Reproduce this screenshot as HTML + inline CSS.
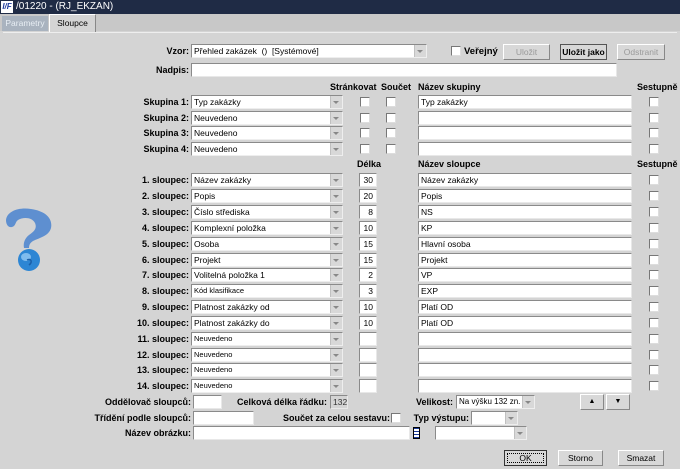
<!DOCTYPE html>
<html><head><meta charset="utf-8"><style>
*{box-sizing:border-box;margin:0;padding:0}
body{width:680px;height:469px;background:#d4d4d4;font-family:"Liberation Sans",Arial,sans-serif;font-size:9px;color:#000;position:relative;overflow:hidden}
.a{position:absolute}
.tb{left:0;top:0;width:680px;height:14px;background:#1f2b45;color:#fff;font-size:10px;line-height:14px;padding-left:16px}
.lg{left:1px;top:1px;width:12px;height:12px;background:#fff;color:#1f3c9c;font-weight:bold;font-style:italic;font-size:8px;line-height:12px;text-align:center}
.l{font-weight:bold;text-align:right;line-height:14px;white-space:nowrap}
.h{font-weight:bold;line-height:12px;white-space:nowrap}
.in{background:#fff;border:1px solid #8a8a8a;border-right-color:#e8e8e8;border-bottom-color:#e8e8e8;height:14px;line-height:12px;padding-left:2px;font-size:8.5px;white-space:nowrap;overflow:hidden}
.cb{background:#fff;border:1px solid #8a8a8a;border-right-color:#eee;border-bottom-color:#eee;height:14px;line-height:12px;padding-left:2px;font-size:8.5px;white-space:nowrap;overflow:hidden}
.cb:after{content:"";position:absolute;right:0;top:0;width:11px;height:12px;background:#d8d8d8 ;border-left:1px solid #c0c0c0}
.cb:before{content:"";position:absolute;right:3px;top:5px;border-left:3px solid transparent;border-right:3px solid transparent;border-top:3px solid #888;z-index:1}
.ck{width:10px;height:10px;background:#fff;border:1px solid #777;border-right-color:#ddd;border-bottom-color:#ddd}
.bt{background:#d8d8d8;border:1px solid #888;border-top-color:#fff;border-left-color:#fff;text-align:center;line-height:14px;height:16px;font-size:8.5px}
.dis{color:#9a9a9a}
.num{text-align:right;padding-right:3px}
</style></head><body>
<div class="a tb">/01220 - (RJ_EKZAN)</div><div class="a lg">I/F</div>
<div class="a" style="left:0;top:14px;width:680px;height:17px;background:#c8c8c8"></div>
<div class="a" style="left:2px;top:16px;width:46px;height:15px;background:#a9b3bf;color:#e8eef4;line-height:15px;text-align:center;font-size:8.5px">Parametry</div>
<div class="a" style="left:49px;top:14px;width:47px;height:18px;background:#d4d4d4;border:1px solid #fff;border-bottom:none;border-right-color:#888;line-height:16px;text-align:center;font-size:8.5px">Sloupce</div>
<div class="a" style="left:3px;top:32px;width:674px;height:1px;background:#eee"></div>

<div class="a l" style="right:491px;top:44px">Vzor:</div>
<div class="a cb" style="left:191px;top:44px;width:236px">Přehled zakázek &nbsp;() &nbsp;[Systémové]</div>
<div class="a ck" style="left:451px;top:46px"></div><div class="a h" style="left:464px;top:46px;font-size:9.5px">Veřejný</div>
<div class="a bt dis" style="left:503px;top:44px;width:47px">Uložit</div>
<div class="a bt" style="left:560px;top:44px;width:47px;border-color:#555;font-weight:bold">Uložit jako</div>
<div class="a bt dis" style="left:617px;top:44px;width:48px">Odstranit</div>
<div class="a l" style="right:491px;top:63px">Nadpis:</div>
<div class="a in" style="left:191px;top:63px;width:426px"></div>

<div class="a h" style="left:330px;top:81px">Stránkovat</div><div class="a h" style="left:381px;top:81px">Součet</div>
<div class="a h" style="left:418px;top:81px">Název skupiny</div><div class="a h" style="left:637px;top:81px">Sestupně</div>

<div class="a l" style="right:491px;top:95px">Skupina 1:</div><div class="a cb" style="left:191px;top:95px;width:152px">Typ zakázky</div><div class="a ck" style="left:360px;top:97px"></div><div class="a ck" style="left:386px;top:97px"></div><div class="a in" style="left:418px;top:95px;width:214px">Typ zakázky</div><div class="a ck" style="left:649px;top:97px"></div>
<div class="a l" style="right:491px;top:111px">Skupina 2:</div><div class="a cb" style="left:191px;top:111px;width:152px">Neuvedeno</div><div class="a ck" style="left:360px;top:113px"></div><div class="a ck" style="left:386px;top:113px"></div><div class="a in" style="left:418px;top:111px;width:214px"></div><div class="a ck" style="left:649px;top:113px"></div>
<div class="a l" style="right:491px;top:126px">Skupina 3:</div><div class="a cb" style="left:191px;top:126px;width:152px">Neuvedeno</div><div class="a ck" style="left:360px;top:128px"></div><div class="a ck" style="left:386px;top:128px"></div><div class="a in" style="left:418px;top:126px;width:214px"></div><div class="a ck" style="left:649px;top:128px"></div>
<div class="a l" style="right:491px;top:142px">Skupina 4:</div><div class="a cb" style="left:191px;top:142px;width:152px">Neuvedeno</div><div class="a ck" style="left:360px;top:144px"></div><div class="a ck" style="left:386px;top:144px"></div><div class="a in" style="left:418px;top:142px;width:214px"></div><div class="a ck" style="left:649px;top:144px"></div>

<div class="a h" style="left:357px;top:158px">Délka</div><div class="a h" style="left:418px;top:158px">Název sloupce</div><div class="a h" style="left:637px;top:158px">Sestupně</div>

<svg class="a" style="left:3px;top:208px" width="50" height="64"><path d="M3 12 C4 3 16 -1 28 1 C42 3 50 10 48 20 C46 28 36 30 30 33 C27 35 26 37 26 40 L21 40 C20 35 22 30 26 27 C32 23 34 20 32 15 C29 9 20 9 15 12 C12 14 13 18 9 19 C5 20 3 16 3 12Z" fill="#5e8fd0"/><circle cx="26" cy="52" r="11" fill="#2d86d4"/><ellipse cx="23" cy="49" rx="5" ry="4" fill="#7fbcee"/><path d="M24 52 C28 50 30 54 26 57" stroke="#1a5fa8" stroke-width="1.5" fill="none"/></svg>

<div class="a l" style="right:491px;top:173px">1. sloupec:</div><div class="a cb" style="left:191px;top:173px;width:152px">Název zakázky</div><div class="a in num" style="left:359px;top:173px;width:18px">30</div><div class="a in" style="left:418px;top:173px;width:214px">Název zakázky</div><div class="a ck" style="left:649px;top:175px"></div>
<div class="a l" style="right:491px;top:189px">2. sloupec:</div><div class="a cb" style="left:191px;top:189px;width:152px">Popis</div><div class="a in num" style="left:359px;top:189px;width:18px">20</div><div class="a in" style="left:418px;top:189px;width:214px">Popis</div><div class="a ck" style="left:649px;top:191px"></div>
<div class="a l" style="right:491px;top:205px">3. sloupec:</div><div class="a cb" style="left:191px;top:205px;width:152px">Číslo střediska</div><div class="a in num" style="left:359px;top:205px;width:18px">8</div><div class="a in" style="left:418px;top:205px;width:214px">NS</div><div class="a ck" style="left:649px;top:207px"></div>
<div class="a l" style="right:491px;top:221px">4. sloupec:</div><div class="a cb" style="left:191px;top:221px;width:152px">Komplexní položka</div><div class="a in num" style="left:359px;top:221px;width:18px">10</div><div class="a in" style="left:418px;top:221px;width:214px">KP</div><div class="a ck" style="left:649px;top:223px"></div>
<div class="a l" style="right:491px;top:237px">5. sloupec:</div><div class="a cb" style="left:191px;top:237px;width:152px">Osoba</div><div class="a in num" style="left:359px;top:237px;width:18px">15</div><div class="a in" style="left:418px;top:237px;width:214px">Hlavní osoba</div><div class="a ck" style="left:649px;top:239px"></div>
<div class="a l" style="right:491px;top:253px">6. sloupec:</div><div class="a cb" style="left:191px;top:253px;width:152px">Projekt</div><div class="a in num" style="left:359px;top:253px;width:18px">15</div><div class="a in" style="left:418px;top:253px;width:214px">Projekt</div><div class="a ck" style="left:649px;top:255px"></div>
<div class="a l" style="right:491px;top:268px">7. sloupec:</div><div class="a cb" style="left:191px;top:268px;width:152px">Volitelná položka 1</div><div class="a in num" style="left:359px;top:268px;width:18px">2</div><div class="a in" style="left:418px;top:268px;width:214px">VP</div><div class="a ck" style="left:649px;top:270px"></div>
<div class="a l" style="right:491px;top:284px">8. sloupec:</div><div class="a cb" style="left:191px;top:284px;width:152px;font-size:7.5px">Kód klasifikace</div><div class="a in num" style="left:359px;top:284px;width:18px">3</div><div class="a in" style="left:418px;top:284px;width:214px">EXP</div><div class="a ck" style="left:649px;top:286px"></div>
<div class="a l" style="right:491px;top:300px">9. sloupec:</div><div class="a cb" style="left:191px;top:300px;width:152px">Platnost zakázky od</div><div class="a in num" style="left:359px;top:300px;width:18px">10</div><div class="a in" style="left:418px;top:300px;width:214px">Platí OD</div><div class="a ck" style="left:649px;top:302px"></div>
<div class="a l" style="right:491px;top:316px">10. sloupec:</div><div class="a cb" style="left:191px;top:316px;width:152px">Platnost zakázky do</div><div class="a in num" style="left:359px;top:316px;width:18px">10</div><div class="a in" style="left:418px;top:316px;width:214px">Platí OD</div><div class="a ck" style="left:649px;top:318px"></div>
<div class="a l" style="right:491px;top:332px">11. sloupec:</div><div class="a cb" style="left:191px;top:332px;width:152px;font-size:7.5px">Neuvedeno</div><div class="a in" style="left:359px;top:332px;width:18px"></div><div class="a in" style="left:418px;top:332px;width:214px"></div><div class="a ck" style="left:649px;top:334px"></div>
<div class="a l" style="right:491px;top:348px">12. sloupec:</div><div class="a cb" style="left:191px;top:348px;width:152px;font-size:7.5px">Neuvedeno</div><div class="a in" style="left:359px;top:348px;width:18px"></div><div class="a in" style="left:418px;top:348px;width:214px"></div><div class="a ck" style="left:649px;top:350px"></div>
<div class="a l" style="right:491px;top:363px">13. sloupec:</div><div class="a cb" style="left:191px;top:363px;width:152px;font-size:7.5px">Neuvedeno</div><div class="a in" style="left:359px;top:363px;width:18px"></div><div class="a in" style="left:418px;top:363px;width:214px"></div><div class="a ck" style="left:649px;top:365px"></div>
<div class="a l" style="right:491px;top:379px">14. sloupec:</div><div class="a cb" style="left:191px;top:379px;width:152px;font-size:7.5px">Neuvedeno</div><div class="a in" style="left:359px;top:379px;width:18px"></div><div class="a in" style="left:418px;top:379px;width:214px"></div><div class="a ck" style="left:649px;top:381px"></div>

<div class="a l" style="right:489px;top:395px">Oddělovač sloupců:</div><div class="a in" style="left:193px;top:395px;width:29px"></div>
<div class="a l" style="right:353px;top:395px">Celková délka řádku:</div><div class="a in" style="left:330px;top:395px;width:18px;background:#d4d4d4;color:#333">132</div>
<div class="a l" style="right:227px;top:395px">Velikost:</div><div class="a cb" style="left:456px;top:395px;width:79px;font-size:8px">Na výšku 132 zn.</div>
<div class="a bt" style="left:580px;top:394px;width:24px;font-size:7px">▲</div><div class="a bt" style="left:606px;top:394px;width:24px;font-size:7px">▼</div>
<div class="a l" style="right:489px;top:411px">Třídění podle sloupců:</div><div class="a in" style="left:193px;top:411px;width:61px"></div>
<div class="a l" style="right:290px;top:411px">Součet za celou sestavu:</div><div class="a ck" style="left:391px;top:413px"></div>
<div class="a l" style="right:211px;top:411px">Typ výstupu:</div><div class="a cb" style="left:471px;top:411px;width:47px"></div>
<div class="a l" style="right:489px;top:426px">Název obrázku:</div><div class="a in" style="left:193px;top:426px;width:217px"></div>
<div class="a" style="left:413px;top:427px;width:7px;height:12px;border:1px solid #000;background:repeating-linear-gradient(#1a3a9a 0 1px,#fff 1px 3px)"></div>
<div class="a cb" style="left:435px;top:426px;width:92px"></div>
<div class="a bt" style="left:504px;top:450px;width:43px;border:1px solid #333;outline:1px dotted #000;outline-offset:-4px">OK</div>
<div class="a bt" style="left:558px;top:450px;width:45px">Storno</div>
<div class="a bt" style="left:618px;top:450px;width:46px">Smazat</div>
</body></html>
